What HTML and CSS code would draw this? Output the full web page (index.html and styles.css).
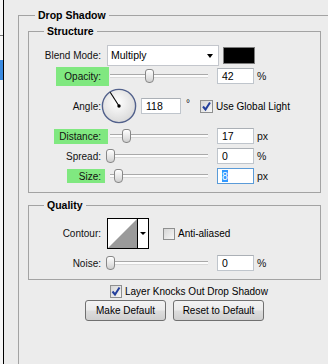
FILE: index.html
```html
<!DOCTYPE html>
<html lang="en">
<head>
  <meta charset="UTF-8" />
  <title>Layer Style - Drop Shadow</title>
  <link rel="stylesheet" href="styles.css">
</head>
<body>
  <div class="dialog">
    <div class="side">
      <div class="side-line"></div>
      <div class="side-sel"></div>
    </div>

    <fieldset class="group outer">
      <legend>Drop Shadow</legend>

      <fieldset class="group inner structure">
        <legend>Structure</legend>

        <div class="row row-blend">
          <label class="lbl">Blend Mode:</label>
          <div class="select">Multiply<span class="caret"></span></div>
          <div class="swatch"></div>
        </div>

        <div class="row row-tight">
          <label class="lbl"><span class="hl hl-opacity">Opacity:</span></label>
          <div class="slider"><div class="thumb" style="left: calc((100% - 9px) * 0.42)"></div></div>
          <div class="field">42</div><span class="unit">%</span>
        </div>

        <div class="row row-angle">
          <label class="lbl">Angle:</label>
          <svg class="dial" width="36" height="36" viewBox="0 0 36 36">
            <defs>
              <radialGradient id="dialFill" cx="45%" cy="40%" r="60%">
                <stop offset="0" stop-color="#ffffff"/>
                <stop offset="1" stop-color="#dadada"/>
              </radialGradient>
            </defs>
            <circle cx="18" cy="18" r="16.6" fill="url(#dialFill)" stroke="#52618c" stroke-width="1.4"/>
            <line x1="18" y1="18" x2="9.2" y2="4.2" stroke="#000" stroke-width="1.1"/>
            <circle cx="18" cy="18" r="1.7" fill="#000"/>
          </svg>
          <div class="field field-angle">118</div>
          <span class="deg">°</span>
          <svg class="check" width="13" height="13" viewBox="0 0 13 13">
            <rect x="0.5" y="0.5" width="12" height="12" fill="url(#boxFill)" stroke="#8e8f8f"/>
            <path d="M3 6.5 L5.5 9.5 L10 2.5" fill="none" stroke="#233f9c" stroke-width="2"/>
          </svg>
          <span class="check-text">Use Global Light</span>
        </div>

        <div class="row">
          <label class="lbl"><span class="hl hl-distance">Distance:</span></label>
          <div class="slider"><div class="thumb" style="left: calc((100% - 9px) * 0.17)"></div></div>
          <div class="field">17</div><span class="unit">px</span>
        </div>

        <div class="row">
          <label class="lbl">Spread:</label>
          <div class="slider"><div class="thumb" style="left: 0"></div></div>
          <div class="field">0</div><span class="unit">%</span>
        </div>

        <div class="row">
          <label class="lbl"><span class="hl hl-size">Size:</span></label>
          <div class="slider"><div class="thumb" style="left: calc((100% - 9px) * 0.08)"></div></div>
          <div class="field focused"><span class="sel">8</span></div><span class="unit">px</span>
        </div>
      </fieldset>

      <fieldset class="group inner quality">
        <legend>Quality</legend>

        <div class="row row-contour">
          <label class="lbl">Contour:</label>
          <svg class="contour" width="42" height="31" viewBox="0 0 42 31">
            <rect x="0.5" y="0.5" width="41" height="30" fill="#fff" stroke="#000"/>
            <polygon points="1,30 30,1 30,30" fill="#9a9a9a"/>
            <line x1="30.5" y1="0" x2="30.5" y2="31" stroke="#000"/>
            <polygon points="33,14 39,14 36,17" fill="#000"/>
          </svg>
          <svg class="check check-small" width="12" height="12" viewBox="0 0 12 12">
            <rect x="0.5" y="0.5" width="11" height="11" fill="url(#boxFill)" stroke="#8e8f8f"/>
          </svg>
          <span class="check-text">Anti-aliased</span>
        </div>

        <div class="row row-noise">
          <label class="lbl">Noise:</label>
          <div class="slider"><div class="thumb" style="left: 0"></div></div>
          <div class="field">0</div><span class="unit">%</span>
        </div>
      </fieldset>

      <div class="footer">
        <div class="knock">
          <svg class="check" width="12" height="13" viewBox="0 0 12 13">
            <rect x="0.5" y="0.5" width="11" height="12" fill="url(#boxFill)" stroke="#8e8f8f"/>
            <path d="M2.5 6.5 L5 9.5 L9.5 2.5" fill="none" stroke="#233f9c" stroke-width="2"/>
          </svg>
          <span class="check-text">Layer Knocks Out Drop Shadow</span>
        </div>
        <div class="buttons">
          <button class="btn btn-make">Make Default</button>
          <button class="btn btn-reset">Reset to Default</button>
        </div>
      </div>
    </fieldset>
  </div>

  <svg class="defs" width="0" height="0">
    <defs>
      <linearGradient id="boxFill" x1="0" y1="0" x2="1" y2="1">
        <stop offset="0" stop-color="#d4d4d4"/>
        <stop offset="1" stop-color="#f8f8f8"/>
      </linearGradient>
    </defs>
  </svg>
</body>
</html>
```

FILE: styles.css
```css
body {
  margin: 0;
  background-color: #ececec;
  font-family: "Liberation Sans", Arial, sans-serif;
  font-size: 10px;
  color: #111;
  overflow: hidden;
}

.dialog {
  display: flex;
  height: 364px;
}

/* cut-off styles list on the left */
.side {
  width: 3px;
  border-right: 1px solid #000;
  background: #f6f6f6;
  padding-top: 35px;
}

.side-line {
  height: 1px;
  background: #7a7a7a;
}

.side-sel {
  height: 20px;
  margin-top: 24px;
  background: #3a8ae0;
}

.defs {
  position: absolute;
}

.group {
  margin: 0;
  padding: 0;
  border: 1px solid #a3a3a3;
  min-width: 0;
}

.group > legend {
  font-weight: bold;
  font-size: 10.5px;
  line-height: 13px;
  padding: 0 3px;
  color: #000;
}

.outer {
  flex: 1;
  margin: 9px 0 0 14px;
  border-right: none;
  border-bottom: none;
}

.outer > legend {
  margin-left: 16px;
}

.inner {
  box-sizing: border-box;
  width: 293px;
  margin: 3px 0 0 9px;
}

.inner > legend {
  margin-left: 15px;
}

.structure {
  padding: 6px 0 8px;
}

.quality {
  margin-top: 6px;
  padding: 6px 0 8px;
}

.row {
  display: flex;
  align-items: center;
  height: 16px;
  margin-top: 4px;
}

.row-blend {
  height: 22px;
  margin-top: 0;
}

.row-tight {
  margin-top: 2px;
}

.row-angle {
  height: 36px;
}

.row-contour {
  height: 31px;
  margin-top: 0;
}

.row-noise {
  margin-top: 6px;
}

.lbl {
  width: 72px;
  text-align: right;
  line-height: 13px;
  flex-shrink: 0;
}

.hl {
  display: inline-block;
  background: #80e880;
  line-height: 13px;
}

.hl-opacity {
  padding: 3px 8px;
  margin: 0 -8px;
}

.hl-distance {
  padding: 1px 7px 1px 5px;
  margin: 0 -7px 0 -5px;
}

.hl-size {
  padding: 1px 4px 0 12px;
  margin: 0 -4px 0 -12px;
}

.select {
  position: relative;
  box-sizing: border-box;
  width: 112px;
  height: 21px;
  margin-left: 6px;
  padding: 3px 0 0 3px;
  background: #fff;
  border: 1px solid #c3c6cc;
  font-size: 10.5px;
  color: #000;
}

.caret {
  position: absolute;
  right: 5px;
  top: 8px;
  border-left: 3.5px solid transparent;
  border-right: 3.5px solid transparent;
  border-top: 4px solid #000;
}

.swatch {
  box-sizing: border-box;
  width: 32px;
  height: 17px;
  margin-left: 4px;
  background: #000;
  border: 1px solid #7c7c7c;
}

.slider {
  position: relative;
  width: 103px;
  height: 16px;
  margin-left: 5px;
  flex-shrink: 0;
}

.slider::before {
  content: "";
  position: absolute;
  left: 4px;
  right: 1px;
  top: 6px;
  height: 2px;
  border-top: 1px solid #a9a9a9;
  background: #fcfcfc;
  border-bottom: 1px solid #d8d8d8;
}

.thumb {
  position: absolute;
  top: 1px;
  width: 7px;
  height: 12px;
  border: 1px solid #878787;
  border-radius: 3px 3px 4px 4px;
  background: linear-gradient(#ffffff, #e4e4e4 60%, #cfcfcf);
}

.field {
  box-sizing: border-box;
  width: 37px;
  height: 16px;
  margin-left: 8px;
  padding-left: 4px;
  line-height: 14px;
  background: #fff;
  border: 1px solid #bfc5cc;
  border-top-color: #abb0b6;
  color: #000;
  font-size: 10.5px;
}

.field-angle {
  width: 40px;
  margin-left: 4px;
}

.field.focused {
  border-color: #5a9bd8;
}

.sel {
  background: #3399ff;
  color: #fff;
}

.unit {
  margin-left: 3px;
  font-size: 10.5px;
}

.deg {
  margin-left: 5px;
  align-self: flex-start;
  margin-top: 10px;
  font-size: 10px;
}

.check {
  flex-shrink: 0;
  display: block;
}

.row-angle .check {
  margin-left: 10px;
}

.check-small {
  margin-left: 14px;
}

.check-text {
  margin-left: 3px;
  color: #000;
}

.contour {
  margin-left: 6px;
  flex-shrink: 0;
}

.footer {
  width: 293px;
  margin-left: 9px;
}

.knock {
  display: flex;
  align-items: center;
  height: 14px;
  margin-top: 4px;
  padding-left: 82px;
}

.buttons {
  display: flex;
  justify-content: center;
  gap: 7px;
  margin-top: 2px;
}

.btn {
  height: 21px;
  padding: 0;
  border: 1px solid #707070;
  border-radius: 3px;
  background: linear-gradient(#f3f3f3, #ebebeb 48%, #dddddd 52%, #cfcfcf);
  font-family: "Liberation Sans", Arial, sans-serif;
  font-size: 10px;
  color: #000;
}

.btn-make {
  width: 81px;
}

.btn-reset {
  width: 91px;
}
```
